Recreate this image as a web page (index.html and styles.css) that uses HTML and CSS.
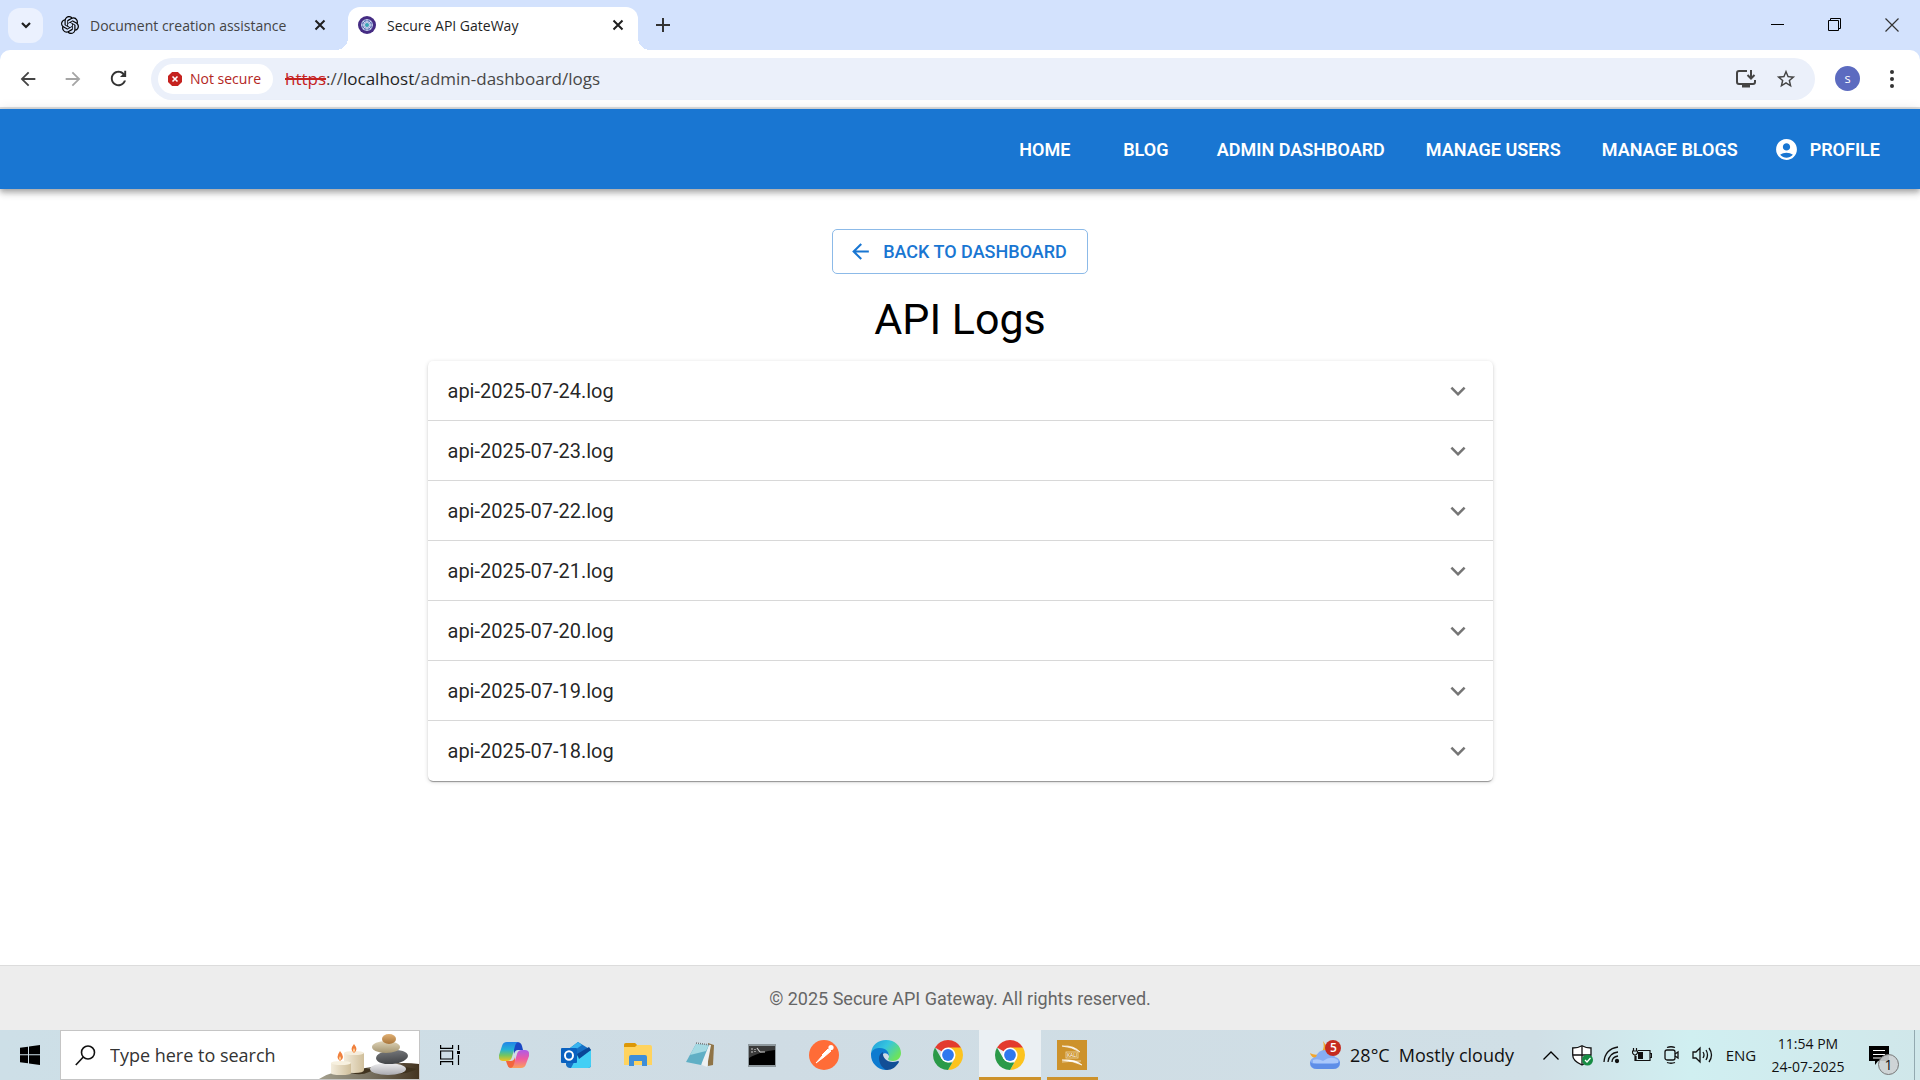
FILE: index.html
```html
<!DOCTYPE html>
<html lang="en">
<head>
<meta charset="utf-8">
<meta name="viewport" content="width=device-width, initial-scale=1">
<title>Secure API GateWay</title>
<link rel="stylesheet" href="styles.css">
</head>
<body>
<svg class="defs" aria-hidden="true">
  <defs>
    <symbol id="expand" viewBox="0 0 24 24"><path d="M16.59 8.59 12 13.17 7.41 8.59 6 10l6 6 6-6z"/></symbol>
    <symbol id="arrow" viewBox="0 0 24 24"><path d="M20 11H7.83l5.59-5.59L12 4l-8 8 8 8 1.41-1.41L7.83 13H20z"/></symbol>
    <symbol id="cross" viewBox="0 0 12 12"><path d="M1.500 1.500 10.500 10.500M10.500 1.500 1.500 10.500" fill="none" stroke="currentColor" stroke-width="2"/></symbol>
    <symbol id="chrome" viewBox="0 0 30 30">
      <path d="M15 15 2.010 7.500A15 15 0 0 1 27.990 7.500z" fill="#e33b2e"/>
      <path d="M15 7.500H27.990A15 15 0 0 1 15 30L21.500 18.750z" fill="#fcc31e"/>
      <path d="M2.010 7.500 8.500 18.750 15 22.500H19.330L15 30A15 15 0 0 1 2.010 7.500z" fill="#2a9a48"/>
      <circle cx="15" cy="15" r="7.500" fill="#fff"/><circle cx="15" cy="15" r="5.900" fill="#2f78ee"/>
    </symbol>
  </defs>
</svg>

<div class="browser">
<div class="tabstrip">
  <button class="tab-search" aria-label="Search tabs"><svg width="12" height="12" viewBox="0 0 12 12"><path d="M2 4l4 4 4-4" fill="none" stroke="#1f1f1f" stroke-width="2.200"/></svg></button>
  <div class="tab">
    <svg width="18" height="18" viewBox="0 0 24 24"><path d="M22.2819 9.8211a5.9847 5.9847 0 0 0-.5157-4.9108 6.0462 6.0462 0 0 0-6.5098-2.9A6.0651 6.0651 0 0 0 4.9807 4.1818a5.9847 5.9847 0 0 0-3.9977 2.9 6.0462 6.0462 0 0 0 .7427 7.0966 5.98 5.98 0 0 0 .511 4.9107 6.051 6.051 0 0 0 6.5146 2.9001A5.9847 5.9847 0 0 0 13.2599 24a6.0557 6.0557 0 0 0 5.7718-4.2058 5.9894 5.9894 0 0 0 3.9977-2.9001 6.0557 6.0557 0 0 0-.7475-7.0729zm-9.022 12.6081a4.4755 4.4755 0 0 1-2.8764-1.0408l.1419-.0804 4.7783-2.7582a.7948.7948 0 0 0 .3927-.6813v-6.7369l2.02 1.1686a.071.071 0 0 1 .038.052v5.5826a4.504 4.504 0 0 1-4.4945 4.4944zm-9.6607-4.1254a4.4708 4.4708 0 0 1-.5346-3.0137l.142.0852 4.783 2.7582a.7712.7712 0 0 0 .7806 0l5.8428-3.3685v2.3324a.0804.0804 0 0 1-.0332.0615L9.74 19.9502a4.4992 4.4992 0 0 1-6.1408-1.6464zM2.3408 7.8956a4.485 4.485 0 0 1 2.3655-1.9728V11.6a.7664.7664 0 0 0 .3879.6765l5.8144 3.3543-2.0201 1.1685a.0757.0757 0 0 1-.071 0l-4.8303-2.7865A4.504 4.504 0 0 1 2.3408 7.872zm16.5963 3.8558L13.1038 8.364 15.1192 7.2a.0757.0757 0 0 1 .071 0l4.8303 2.7913a4.4944 4.4944 0 0 1-.6765 8.1042v-5.6772a.79.79 0 0 0-.407-.667zm2.0107-3.0231l-.142-.0852-4.7735-2.7818a.7759.7759 0 0 0-.7854 0L9.409 9.2297V6.8974a.0662.0662 0 0 1 .0284-.0615l4.8303-2.7866a4.4992 4.4992 0 0 1 6.6802 4.66zM8.3065 12.863l-2.02-1.1638a.0804.0804 0 0 1-.038-.0567V6.0742a4.4992 4.4992 0 0 1 7.3757-3.4537l-.142.0805L8.704 5.459a.7948.7948 0 0 0-.3927.6813zm1.0976-2.3654l2.602-1.4998 2.6069 1.4998v2.9994l-2.5974 1.4997-2.6067-1.4997Z"/></svg>
    <span class="tab-title">Document creation assistance</span>
    <button class="tab-close" aria-label="Close tab"><svg width="12" height="12"><use href="#cross"/></svg></button>
  </div>
  <div class="tab tab-active">
    <svg width="18" height="18" viewBox="0 0 18 18"><circle cx="9" cy="9" r="9" fill="#452c83"/><circle cx="9" cy="9" r="6" fill="#a8b4dc"/><circle cx="9" cy="9" r="4.500" fill="none" stroke="#5567b0"/><path d="M9 3v12M3 9h12M5 5l8 8M13 5l-8 8" stroke="#dce3f5" stroke-width=".8"/><circle cx="9" cy="9" r="2" fill="#38a5b5"/></svg>
    <span class="tab-title">Secure API GateWay</span>
    <button class="tab-close" aria-label="Close tab"><svg width="12" height="12"><use href="#cross"/></svg></button>
  </div>
  <button class="new-tab" aria-label="New tab"><svg width="14" height="14" viewBox="0 0 14 14"><path d="M7 0v14M0 7h14" stroke="#333" stroke-width="2"/></svg></button>
  <div class="window-controls">
    <button aria-label="Minimize"><svg width="14" height="14" viewBox="0 0 14 14"><path d="M0 6.500h13" stroke="#000"/></svg></button>
    <button aria-label="Restore"><svg width="14" height="14" viewBox="0 0 14 14"><path d="M.5 2.500h10v10H.5zM2.500 2.500v-2h10v10h-2" fill="none" stroke="#000"/></svg></button>
    <button aria-label="Close"><svg width="14" height="14" viewBox="0 0 14 14"><path d="M.5.5l13 13M13.500.5l-13 13" stroke="#333" stroke-width="1.200"/></svg></button>
  </div>
</div>

<div class="toolbar">
  <button class="tool" aria-label="Back"><svg width="22" height="22" fill="#444"><use href="#arrow"/></svg></button>
  <button class="tool tool-forward" aria-label="Forward"><svg class="flip" width="22" height="22" fill="#a5a5a5"><use href="#arrow"/></svg></button>
  <button class="tool" aria-label="Reload"><svg width="23" height="23" viewBox="0 0 24 24" fill="#333"><path d="M17.650 6.350C16.200 4.900 14.210 4 12 4c-4.420 0-7.990 3.580-7.990 8s3.570 8 7.990 8c3.730 0 6.840-2.550 7.730-6h-2.080c-.82 2.330-3.040 4-5.650 4-3.310 0-6-2.690-6-6s2.690-6 6-6c1.660 0 3.140.69 4.220 1.780L13.500 10.500H20V4h-2v2.700z"/></svg></button>
  <div class="omnibox">
    <button class="security"><svg width="14" height="14" viewBox="0 0 14 14"><path d="M4.100 0h5.800L14 4.100v5.800L9.900 14H4.100L0 9.900V4.100z" fill="#c5221f"/><path d="M4.500 4.500l5 5M9.500 4.500l-5 5" stroke="#fff" stroke-width="1.600"/></svg>Not secure</button>
    <label class="url"><s>https</s><span>://<b>localhost</b></span><input type="text" value="/admin-dashboard/logs" aria-label="Address"></label>
    <button class="tool tool-small" aria-label="Install app"><svg width="22" height="20" viewBox="0 0 22 20" fill="none" stroke="#444" stroke-width="2"><path d="M12 2H4Q2 2 2 4v9q0 2 2 2h14q2 0 2-2v-2M16 1v8M12.500 6l3.500 3.500L19.500 6"/><path d="M7 17h8" stroke-width="3"/></svg></button>
    <button class="tool tool-small" aria-label="Bookmark this tab"><svg width="22" height="22" viewBox="0 0 24 24" fill="#444"><path d="M22 9.240l-7.190-.62L12 2 9.190 8.630 2 9.240l5.460 4.730L5.820 21 12 17.270 18.180 21l-1.630-7.030L22 9.240zM12 15.400l-3.760 2.270 1-4.280-3.320-2.880 4.380-.38L12 6.100l1.710 4.040 4.380.38-3.320 2.880 1 4.280L12 15.400z"/></svg></button>
  </div>
  <button class="avatar" aria-label="Account S">s</button>
  <button class="tool menu" aria-label="Menu"><svg width="4" height="18" viewBox="0 0 4 18" fill="#333"><circle cx="2" cy="2" r="2"/><circle cx="2" cy="9" r="2"/><circle cx="2" cy="16" r="2"/></svg></button>
</div>
</div>

<header class="appbar">
  <nav class="nav">
    <a href="#">Home</a>
    <a href="#">Blog</a>
    <a href="#">Admin Dashboard</a>
    <a href="#">Manage Users</a>
    <a href="#">Manage Blogs</a>
    <a href="#" class="profile"><svg width="25" height="25" viewBox="0 0 24 24" fill="#fff"><path d="M12 2C6.480 2 2 6.480 2 12s4.480 10 10 10 10-4.480 10-10S17.520 2 12 2zm0 4c1.930 0 3.500 1.570 3.500 3.500S13.930 13 12 13s-3.500-1.570-3.500-3.500S10.070 6 12 6zm0 14c-2.030 0-4.430-.82-6.140-2.880C7.550 15.800 9.680 15 12 15s4.450.8 6.140 2.120C16.430 19.180 14.030 20 12 20z"/></svg>Profile</a>
  </nav>
</header>

<main class="content">
  <button class="back"><svg width="25" height="25" fill="currentColor"><use href="#arrow"/></svg>Back to Dashboard</button>
  <h1>API Logs</h1>
  <div class="logs">
    <button aria-expanded="false">api-2025-07-24.log<svg width="30" height="30"><use href="#expand"/></svg></button>
    <button aria-expanded="false">api-2025-07-23.log<svg width="30" height="30"><use href="#expand"/></svg></button>
    <button aria-expanded="false">api-2025-07-22.log<svg width="30" height="30"><use href="#expand"/></svg></button>
    <button aria-expanded="false">api-2025-07-21.log<svg width="30" height="30"><use href="#expand"/></svg></button>
    <button aria-expanded="false">api-2025-07-20.log<svg width="30" height="30"><use href="#expand"/></svg></button>
    <button aria-expanded="false">api-2025-07-19.log<svg width="30" height="30"><use href="#expand"/></svg></button>
    <button aria-expanded="false">api-2025-07-18.log<svg width="30" height="30"><use href="#expand"/></svg></button>
  </div>
</main>

<footer class="footer">© 2025 Secure API Gateway. All rights reserved.</footer>

<div class="taskbar">
  <button class="start" aria-label="Start"><svg width="20" height="20" viewBox="0 0 20 20"><path d="M0 2.800 8 1.700V9.300H0zM9 1.500 20 0V9.300H9zM0 10.300H8V18.200L0 17.200zM9 10.300H20V20L9 18.400z"/></svg></button>
  <label class="search">
    <svg width="21" height="21" viewBox="0 0 21 21" fill="none" stroke="#111" stroke-width="1.600"><circle cx="13" cy="7.500" r="6.500"/><path d="M8.300 12 .8 20"/></svg>
    <input type="text" placeholder="Type here to search" aria-label="Type here to search">
    <svg class="stones" width="100" height="46" viewBox="0 0 100 46">
      <defs>
        <linearGradient id="ground" x2="1"><stop stop-color="#a4a08e"/><stop offset=".5" stop-color="#777060"/><stop offset="1" stop-color="#453521"/></linearGradient>
        <linearGradient id="wax" x2="1"><stop stop-color="#f3ecdc"/><stop offset="1" stop-color="#d0bf9b"/></linearGradient>
        <linearGradient id="s1" x2="0" y2="1"><stop stop-color="#e0b074"/><stop offset="1" stop-color="#a87439"/></linearGradient>
        <linearGradient id="s2" x2="0" y2="1"><stop stop-color="#ded3b7"/><stop offset="1" stop-color="#a39470"/></linearGradient>
        <linearGradient id="s3" x2="0" y2="1"><stop stop-color="#75777a"/><stop offset="1" stop-color="#424447"/></linearGradient>
        <linearGradient id="s4" x2="0" y2="1"><stop stop-color="#eeeef0"/><stop offset="1" stop-color="#aaaab0"/></linearGradient>
      </defs>
      <path d="M0 46Q16 36 40 36L70 31Q85 29 100 31V46z" fill="url(#ground)"/>
      <path d="M32 40q10 3 18-1l5-2-8-2zM64 39q18 5 34-3l-12-2z" fill="#40331f"/>
      <path d="M25 20v17q0 3 10 3t10-3V20z" fill="url(#wax)"/><ellipse cx="35" cy="20" rx="10" ry="2" fill="#f5eddc"/>
      <path d="M12 30v10q0 2 10 2t10-2V30z" fill="url(#wax)"/><ellipse cx="22" cy="30" rx="10" ry="2" fill="#f7f0df"/>
      <path d="M35 11q-5 6 0 9 5-3 0-9zM21 18q-5 7 0 10 6-3 0-10z" fill="#f0803d"/><path d="M35 15q-2 3 0 4 2-1 0-4zM21 23q-2 3 0 4 2-1 0-4z" fill="#ffd7a0"/>
      <ellipse cx="69" cy="36" rx="18" ry="6" fill="url(#s4)"/><ellipse cx="73" cy="24" rx="16" ry="7" transform="rotate(-5 73 24)" fill="url(#s3)"/><ellipse cx="67" cy="14" rx="14" ry="6" fill="url(#s2)"/><ellipse cx="70" cy="6" rx="7" ry="5" fill="url(#s1)"/>
    </svg>
  </label>
  <button class="taskview" aria-label="Task View"><svg width="20" height="20" viewBox="0 0 20 20" fill="none" stroke="#000" stroke-width="1.200"><path d="M.6 0v3.400h12V0M.6 20v-3.400h12V20M.6 6h12v8h-12zM18.500 0v5M18.500 10v10"/><path d="M17 6h3v3h-3z" fill="#000" stroke="none"/></svg></button>
  <div class="apps">
    <button aria-label="Copilot"><svg width="30" height="28" viewBox="0 0 30 28"><defs><linearGradient id="c1" x2="0" y2="1"><stop stop-color="#2384e8"/><stop offset=".4" stop-color="#25b2d5"/><stop offset=".7" stop-color="#73c561"/><stop offset="1" stop-color="#efc321"/></linearGradient><linearGradient id="c2" x2="0" y2="1"><stop stop-color="#ae5be8"/><stop offset=".5" stop-color="#ee5ba1"/><stop offset="1" stop-color="#fba15b"/></linearGradient></defs><path d="M14 1h4q4 0 5 4l1 4h-5q-3 0-4 4z" fill="#1a48c4"/><path d="M16 27h-4q-3 0-4-4l-1-3h5q3 0 4-4z" fill="#f2663d"/><path d="M8 1h12q-3 0-4 4l-3 11q-1 4-5 4H4q-5 0-4-6L3 5q1-4 5-4z" fill="url(#c1)"/><path d="M22 27H11q3 0 4-4l3-10q1-4 5-4h3q5 0 4 6l-3 8q-1 4-5 4z" fill="url(#c2)"/></svg></button>
    <button aria-label="Outlook"><svg width="30" height="26" viewBox="0 0 30 26"><path d="M5 9 17 0 30 8v15q0 3-3 3H9q-3 0-4-3z" fill="#1670c5"/><path d="M5 9 17 0l4 3L8 12z" fill="#38b3ee"/><path d="M17 13 30 8v15q0 3-3 3H10z" fill="#42cff5"/><path d="m16 12 12-7 2 3-12 9z" fill="#0a4797"/><rect y="6" width="16" height="15" rx="1" fill="#0a62c0"/><ellipse cx="8" cy="13.500" rx="4" ry="4.200" fill="none" stroke="#fff" stroke-width="2"/></svg></button>
    <button aria-label="File Explorer"><svg width="28" height="24" viewBox="0 0 28 24"><path d="M0 2q0-2 2-2h9l2 2h13q2 0 2 2v18H0z" fill="#ffd35e"/><path d="M0 2q0-2 2-2h9l2 2-2 2H0z" fill="#dc9707"/><path d="M5 23V14q0-2 2-2h14q2 0 2 2v9h-5v-5h-8v5z" fill="#3e8ed8"/></svg></button>
    <button aria-label="Notepad"><svg width="28" height="26" viewBox="0 0 28 26"><path d="m22 1 6 2-1 20-5 1z" fill="#8f7447"/><path d="m11 1 14 2-4 22-5-2z" fill="#edf0f1"/><path d="M10 2 23 3 15 23 0 20z" fill="#60afc5"/><path d="M10 2 23 3 20 9 4 13z" fill="#a5dae3"/><path d="m10 1 14 2" stroke="#71777b" stroke-width="1.500" stroke-dasharray="1 1"/></svg></button>
    <button aria-label="Command Prompt"><svg width="28" height="23" viewBox="0 0 28 23"><rect width="28" height="23" fill="#8f999e"/><rect x="1" y="2" width="26" height="19" fill="#000"/><path d="M1 2h26v4Q10 8 1 14z" fill="#3b3b3b"/><path d="M3 5h2M3 8h2M7 5v1M7 7v1M9 4l3 4M12 8h5" stroke="#ccc" stroke-width="1.200"/></svg></button>
    <button aria-label="Postman"><svg width="30" height="30" viewBox="0 0 30 30"><circle cx="15" cy="15" r="15" fill="#ff6c37"/><circle cx="22" cy="7.500" r="2.600" fill="#fff"/><path d="m19 9-6 6 2 2 7-6zM14 15l-7 8 8-6" fill="#fff" stroke="#fff"/></svg></button>
    <button aria-label="Edge"><svg width="30" height="30" viewBox="0 0 30 30"><defs><linearGradient id="e1" x2="1" y2=".6"><stop stop-color="#1f9bda"/><stop offset=".5" stop-color="#36c5df"/><stop offset="1" stop-color="#6de35b"/></linearGradient></defs><path d="M0 13C1 5 7 0 15 0c9 0 15 6 15 13 0 5-4 8-8 8-3 0-5-1-5-2s1-1 1-3c0-4-4-7-8-7-5 0-8 2-10 4z" fill="url(#e1)"/><path d="M0 13c2-4 5-5 9-5 6 0 9 4 9 8-1-3-5-4-7-1-3 5 1 14 7 15C8 31 0 24 0 15z" fill="#0d7bd0"/><path d="M8 18c0-3 2-5 4-6-1 7 6 12 15 9 1 0 1 1 1 1-3 5-7 8-12 8-4-1-8-6-8-12z" fill="#124f96"/></svg></button>
    <button aria-label="Chrome"><svg width="30" height="30"><use href="#chrome"/></svg></button>
    <button aria-label="Chrome, active window" class="app-active"><svg width="30" height="30"><use href="#chrome"/></svg></button>
    <button aria-label="Kali" class="app-open"><svg width="30" height="30" viewBox="0 0 30 30"><path d="M0 0h30v30H0z" fill="#cd922b"/><path d="M5 6q12-1 18 6-8-5-18-6zM5 20q14-1 20 5-9-4-20-5z" fill="#fff" stroke="#fff" stroke-width=".6"/><path d="M5 22q14-1 19-1" fill="none" stroke="#fff" stroke-width=".6"/><rect x="9" y="12" width="12" height="6" fill="none" stroke="#ecd6aa" stroke-width=".8"/><text x="10" y="17" class="kali">KALI</text></svg></button>
  </div>
  <div class="tray">
    <button class="weather"><svg width="31" height="31" viewBox="0 0 31 31"><path d="M13 1C16 11 9 18 0 13q1 5 8 6l14-5z" fill="#f3a62c"/><path d="M7 29q-7 0-7-6 0-5 6-6Q8 10 15 10q8 0 10 7 5 1 5 6 0 6-7 6z" fill="#86adf4"/><path d="M7 24q-6 0-7-3 0 8 7 8h16q7 0 7-8-2 3-7 3z" fill="#5e8ee8"/><path d="M3 20q5-2 10 1 8-6 15-1v3H3z" fill="#aac8fb"/><circle cx="23" cy="8" r="8" fill="#c52b20"/><text x="20" y="12" class="alert">5</text></svg><span>28°C</span><span>Mostly cloudy</span></button>
    <button class="up" aria-label="Show hidden icons"><svg width="16" height="9" viewBox="0 0 16 9"><path d="m.5 8.500 7.500-7.500 7.500 7.500" fill="none" stroke="#000" stroke-width="1.300"/></svg></button>
    <button aria-label="Windows Security"><svg width="21" height="21" viewBox="0 0 21 21"><path d="M10 .7Q6 3 .7 3v7q0 6 9.300 10 9-4 9-10V3Q14 3 10 .7z" fill="#fff" stroke="#111" stroke-width="1.300"/><path d="M10 1v19M1 10h18" stroke="#111" stroke-width="1.300"/><circle cx="15.500" cy="15" r="5.500" fill="#168c43"/><path d="m13 15 2 2 3.500-4" fill="none" stroke="#fff" stroke-width="1.300"/></svg></button>
    <button aria-label="Network"><svg width="18" height="18" viewBox="0 0 18 18" fill="none" stroke="#111" stroke-width="1.300"><path d="M1 16Q2 3 15 1M5 16Q6 7 15 6M9 16q0-5 6-6"/><circle cx="14" cy="15" r="1.500" fill="#111"/></svg></button>
    <button aria-label="Battery"><svg width="20" height="14" viewBox="0 0 20 14" fill="none" stroke="#111" stroke-width="1.200"><path d="M6 2.500h12v10H4V8M18.500 5.500h1v4h-1M1.500 0v3M4.500 0v3M.5 3h5v2q-1 2-2.500 2T.5 5zM3 7v6"/><path d="M6 4h5v7H6z" fill="#111" stroke="none"/></svg></button>
    <button aria-label="Meet now"><svg width="16" height="18" viewBox="0 0 16 18" fill="none" stroke="#111" stroke-width="1.300"><rect x="1" y="4" width="10" height="10" rx="2"/><path d="m11 8 3-2v6l-3-2M3 1.500q4-1.500 8 0M3 16.500q4 1.500 8 0"/></svg></button>
    <button aria-label="Volume"><svg width="21" height="18" viewBox="0 0 21 18" fill="none" stroke="#111" stroke-width="1.300"><path d="M1 6h3l4-4v14l-4-4H1zM11 6q2 3 0 6M14 4q3 5 0 10M17 2q5 7 0 14"/></svg></button>
    <button class="lang">ENG</button>
    <button class="clock"><span>11:54 PM</span><span>24-07-2025</span></button>
    <button class="notes" aria-label="Notifications"><svg width="20" height="19" viewBox="0 0 20 19"><path d="M0 0h20v15H9l-3 4v-4H0z"/><path d="M4 4.500h12M4 8.500h12M4 12h8" stroke="#fff" stroke-width="1.200"/></svg><span class="badge">1</span></button>
    <button class="show-desktop" aria-label="Show desktop"></button>
  </div>
</div>
</body>
</html>
```
FILE: styles.css
```css
* { box-sizing: border-box; }

body {
  margin: 0;
  min-height: 100vh;
  display: flex;
  flex-direction: column;
  font-family: Roboto, sans-serif;
  background: #fff;
}

button {
  font: inherit;
  color: inherit;
  border: 0;
  padding: 0;
  background: none;
  display: flex;
  align-items: center;
  justify-content: center;
  flex-shrink: 0;
  white-space: nowrap;
}

input {
  font: inherit;
  color: inherit;
  border: 0;
  padding: 0;
  background: none;
  outline: 0;
  min-width: 0;
  flex: 1;
}

svg { flex-shrink: 0; }
.defs { position: absolute; width: 0; height: 0; }

.browser, .taskbar { font-family: "Open Sans", "Noto Sans", sans-serif; }
.browser { background: #d3e2fd; }

/* Browser tabs */
.tabstrip {
  height: 50px;
  display: flex;
  align-items: center;
  padding-left: 8px;
}
.tab-search { width: 35px; height: 35px; border-radius: 12px; background: #ebf1fe; }
.tab {
  width: 296px;
  height: 43px;
  margin-top: 7px;
  padding: 0 7px 7px 18px;
  display: flex;
  align-items: center;
  gap: 11px;
  font-size: 14px;
  color: #444;
}
.tab svg { color: #1f1f1f; }
.tab-title { flex: 1; white-space: nowrap; }
.tab-close { width: 24px; height: 24px; }
.tab-active {
  position: relative;
  width: 290px;
  margin-left: 9px;
  padding: 0 8px 7px 10px;
  background: #fff;
  border-radius: 12px 12px 0 0;
  color: #1f1f1f;
}
.tab-active::before, .tab-active::after {
  content: "";
  position: absolute;
  bottom: 0;
  width: 12px;
  height: 12px;
}
.tab-active::before { right: 100%; background: radial-gradient(circle at 0 0, #d3e2fd 12px, #fff 12px); }
.tab-active::after { left: 100%; background: radial-gradient(circle at 100% 0, #d3e2fd 12px, #fff 12px); }
.new-tab { width: 50px; height: 50px; }
.window-controls { margin-left: auto; display: flex; }
.window-controls button { width: 57px; height: 48px; }

/* Address bar */
.toolbar {
  height: 59px;
  padding: 0 16px;
  display: flex;
  align-items: center;
  background: #fff;
  border-bottom: 2px solid #dfe1e3;
  border-radius: 10px 10px 0 0;
}
.tool { width: 24px; height: 40px; margin-right: 21px; }
.flip { transform: rotate(180deg); }
.omnibox {
  flex: 1;
  height: 42px;
  padding: 0 17px 0 7px;
  display: flex;
  align-items: center;
  background: #ebf0fa;
  border-radius: 21px;
}
.security {
  height: 30px;
  padding: 0 12px 0 10px;
  gap: 8px;
  border-radius: 15px;
  background: #fff;
  color: #b3261e;
  font-size: 14px;
  font-weight: 500;
}
.url { flex: 1; display: flex; align-items: center; margin-left: 12px; font-size: 17px; color: #474747; }
.url s { color: #c5221f; text-decoration-thickness: 2px; }
.url b { font-weight: 400; color: #1f1f1f; }
.tool-small { width: 24px; margin: 0 0 0 16px; }
.avatar {
  width: 25px;
  height: 25px;
  margin-left: 20px;
  border-radius: 50%;
  background: #5c6bc0;
  color: #fff;
  font-size: 13px;
  line-height: 13px;
}
.menu { margin: 0 0 0 20px; }

/* App header */
.appbar {
  position: relative;
  height: 80px;
  padding: 0 30px;
  display: flex;
  align-items: center;
  justify-content: flex-end;
  background: #1976d2;
  box-shadow: 0 2px 5px rgba(0,0,0,.2), 0 5px 6px rgba(0,0,0,.14), 0 1px 12px rgba(0,0,0,.12);
}
.nav { display: flex; gap: 21px; }
.nav a {
  min-width: 80px;
  padding: 0 10px;
  display: flex;
  align-items: center;
  justify-content: center;
  color: #fff;
  font-size: 18px;
  font-weight: 600;
  text-transform: uppercase;
  text-decoration: none;
}
.nav .profile { gap: 11px; padding-left: 5px; }

/* Log list */
.content {
  flex: 1;
  width: 100%;
  max-width: 1125px;
  margin: 0 auto;
  padding: 40px 30px;
  display: flex;
  flex-direction: column;
  align-items: center;
}
.back {
  height: 45px;
  padding: 0 20px 0 15px;
  gap: 10px;
  border: 1px solid #8cbae8;
  border-radius: 5px;
  color: #1976d2;
  font-size: 18px;
  font-weight: 500;
  text-transform: uppercase;
}
h1 { margin: 19px 0 16px; font-size: 43px; line-height: 52px; font-weight: 400; color: #000; }
.logs {
  width: 100%;
  border-radius: 5px;
  box-shadow: 0 3px 1px -2px rgba(0,0,0,.2), 0 1px 1px rgba(0,0,0,.2), 0 1px 4px rgba(0,0,0,.16);
}
.logs button {
  width: 100%;
  height: 60px;
  padding: 0 20px;
  justify-content: space-between;
  border-bottom: 1px solid #d8d8d8;
  font-size: 20px;
  color: rgba(0,0,0,.87);
}
.logs button:last-child { border-bottom: 0; }
.logs svg { fill: #757575; }

.footer {
  height: 65px;
  border-top: 1px solid #dcdcdc;
  background: #ededed;
  color: #666;
  display: flex;
  align-items: center;
  justify-content: center;
  font-size: 18px;
}

/* Taskbar */
.taskbar {
  height: 50px;
  display: flex;
  background: linear-gradient(90deg, #cddfe7, #cfdce4 40%, #d0dfe6 80%, #d0eff1 88%, #d0e7ea);
  color: #111;
}
.start { width: 60px; }
.search {
  width: 360px;
  padding-left: 14px;
  display: flex;
  align-items: center;
  gap: 14px;
  border: 1px solid #c5c5c5;
  background: #fff;
  font-size: 18px;
}
.search input::placeholder { color: #333; opacity: 1; }
.stones { align-self: flex-end; }
.taskview { width: 60px; margin-right: 3px; }
.apps { display: flex; }
.apps button { width: 62px; }
.apps .app-active { background: #ebf0f3; box-shadow: inset 0 -3px #cd922b; }
.apps .app-open { background: linear-gradient(#cd922b, #cd922b) center bottom / 51px 3px no-repeat; }
.kali { font: 5px "Open Sans", sans-serif; fill: #fff; }
.alert { font: 600 12px "Open Sans", sans-serif; fill: #fff; }
.tray { margin-left: auto; display: flex; }
.tray button { width: 30px; }
.tray .weather { width: auto; gap: 9px; margin-right: 21px; font-size: 18px; }
.tray .up { width: 32px; }
.tray .lang { width: 48px; font-size: 15px; }
.tray .clock { width: 86px; flex-direction: column; font-size: 14px; line-height: 23px; }
.tray .notes { position: relative; width: 63px; padding-right: 7px; }
.badge {
  position: absolute;
  left: 27px;
  top: 24px;
  width: 21px;
  height: 21px;
  border: 1px solid #777;
  border-radius: 50%;
  background: rgba(205,210,212,.9);
  font-size: 14px;
  line-height: 19px;
  text-align: center;
}
.tray .show-desktop { width: 6px; border-left: 1px solid #93a9b0; }
```
